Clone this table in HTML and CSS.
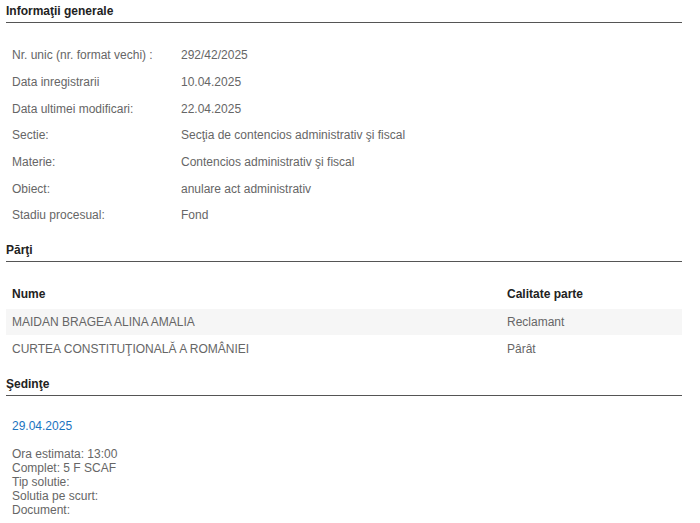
FILE: index.html
```html
<!DOCTYPE html>
<html lang="ro">
<head>
    <meta charset="UTF-8">
    <meta name="viewport" content="width=device-width, initial-scale=1.0">
    <title>Detalii dosar</title>
    <link rel="stylesheet" href="styles.css">
</head>
<body>
    <div id="dosar">
        <h3 class="section-title">Informaţii generale</h3>
        <table class="info-table">
            <tr><td class="label">Nr. unic (nr. format vechi) :</td><td>292/42/2025</td></tr>
            <tr><td class="label">Data inregistrarii</td><td>10.04.2025</td></tr>
            <tr><td class="label">Data ultimei modificari:</td><td>22.04.2025</td></tr>
            <tr><td class="label">Sectie:</td><td>Secţia de contencios administrativ şi fiscal</td></tr>
            <tr><td class="label">Materie:</td><td>Contencios administrativ şi fiscal</td></tr>
            <tr><td class="label">Obiect:</td><td>anulare act administrativ</td></tr>
            <tr><td class="label">Stadiu procesual:</td><td>Fond</td></tr>
        </table>

        <h3 class="section-title">Părţi</h3>
        <table class="parti-table">
            <tr><th class="nume">Nume</th><th>Calitate parte</th></tr>
            <tr class="odd"><td>MAIDAN BRAGEA ALINA AMALIA</td><td>Reclamant</td></tr>
            <tr><td>CURTEA CONSTITUŢIONALĂ A ROMÂNIEI</td><td>Pârât</td></tr>
        </table>

        <h3 class="section-title">Şedinţe</h3>
        <div class="sedinta">
            <div class="sedinta-data">29.04.2025</div>
            <div class="sedinta-info">
                Ora estimata: 13:00<br>
                Complet: 5 F SCAF<br>
                Tip solutie:<br>
                Solutia pe scurt:<br>
                Document:
            </div>
        </div>
    </div>
</body>
</html>
```

FILE: styles.css
```css
body {
    font-family: 'Liberation Sans', Arial, sans-serif;
    margin: 0;
    padding: 0;
    background-color: #ffffff;
    color: #666666;
    font-size: 12px;
}
#dosar {
    width: 676px;
    margin-left: 6px;
    padding-top: 4px;
}
.section-title {
    font-size: 12px;
    font-weight: bold;
    color: #222222;
    margin: 0;
    padding-bottom: 4px;
    border-bottom: 1px solid #555555;
}
.info-table {
    border-collapse: collapse;
    margin: 19px 0 14px 0;
}
.info-table td {
    height: 26.7px;
    padding: 0 6px;
    vertical-align: middle;
}
.info-table td.label {
    width: 157px;
}
.parti-table {
    width: 100%;
    border-collapse: collapse;
    table-layout: fixed;
    margin: 18px 0 15px 0;
}
.parti-table th {
    text-align: left;
    color: #222222;
    font-weight: bold;
    height: 29px;
    padding: 0 6px;
}
.parti-table th.nume {
    width: 483px;
}
.parti-table td {
    height: 26.5px;
    padding: 0 6px;
}
.parti-table tr.odd td {
    background-color: #f6f6f6;
}
.sedinta {
    padding: 23px 6px 0 6px;
}
.sedinta-data {
    color: #1a73c0;
    font-size: 12px;
    margin-bottom: 14px;
}
.sedinta-info {
    line-height: 14px;
}
```
